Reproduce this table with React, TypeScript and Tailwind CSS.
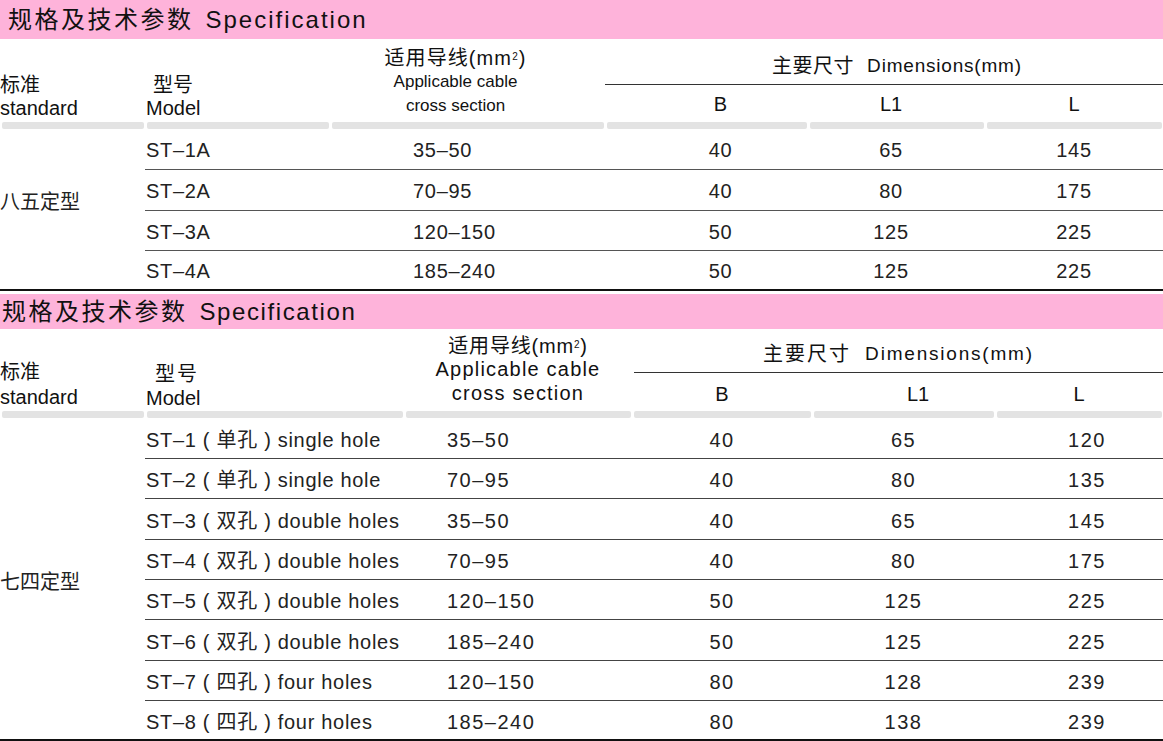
import React from "react";

const FONT = "font-['Liberation_Sans','Noto_Sans_CJK_SC',sans-serif]";

const t1Rows = [
  { m: "ST–1A", s: "35–50", b: "40", l1: "65", l: "145", h: "h-[41px]" },
  { m: "ST–2A", s: "70–95", b: "40", l1: "80", l: "175", h: "h-[41px]" },
  { m: "ST–3A", s: "120–150", b: "50", l1: "125", l: "225", h: "h-[40px]" },
  { m: "ST–4A", s: "185–240", b: "50", l1: "125", l: "225", h: "h-[38px]" },
];

const t2Rows = [
  { m: "ST–1 ( 单孔 ) single hole", s: "35–50", b: "40", l1: "65", l: "120", h: "h-[41px]" },
  { m: "ST–2 ( 单孔 ) single hole", s: "70–95", b: "40", l1: "80", l: "135", h: "h-[40px]" },
  { m: "ST–3 ( 双孔 ) double holes", s: "35–50", b: "40", l1: "65", l: "145", h: "h-[41px]" },
  { m: "ST–4 ( 双孔 ) double holes", s: "70–95", b: "40", l1: "80", l: "175", h: "h-[40px]" },
  { m: "ST–5 ( 双孔 ) double holes", s: "120–150", b: "50", l1: "125", l: "225", h: "h-[40px]" },
  { m: "ST–6 ( 双孔 ) double holes", s: "185–240", b: "50", l1: "125", l: "225", h: "h-[41px]" },
  { m: "ST–7 ( 四孔 ) four holes", s: "120–150", b: "80", l1: "128", l: "239", h: "h-[40px]" },
  { m: "ST–8 ( 四孔 ) four holes", s: "185–240", b: "80", l1: "138", l: "239", h: "h-[38px]" },
];

function Title({ pl, tight }: { pl: string; tight?: boolean }) {
  return (
    <div className={`flex items-center ${pl}`}>
      <span className="text-[24px] tracking-[2.5px]">规格及技术参数</span>
      <span className={`ml-[12px] text-[24px] ${tight ? "tracking-[1.6px]" : "tracking-[2px]"}`}>Specification</span>
    </div>
  );
}

function GrayBar({ widths }: { widths: string[] }) {
  return (
    <div className="flex h-[7px]">
      {widths.map((w, i) => (
        <div key={i} className={`${w} pl-[2px] pr-[1px]`}>
          <div className="h-full rounded-[2px] bg-[#e3e3e3]" />
        </div>
      ))}
    </div>
  );
}

export default function App() {
  return (
    <div className={`w-[1163px] h-[741px] overflow-hidden bg-white text-[#111] ${FONT}`}>
      {/* ===== Section 1 ===== */}
      <div className="h-[39px] bg-[#feb3da] flex items-center pt-[1px]">
        <Title pl="pl-[8px]" />
      </div>
      <div className="flex h-[83px]">
        <div className="w-[145px] flex flex-col justify-end pb-[2px] text-[20px] leading-[23px]">
          <span>标准</span>
          <span>standard</span>
        </div>
        <div className="w-[185px] flex flex-col justify-end pb-[2px] text-[20px] leading-[23px]">
          <span className="pl-[8px]">型号</span>
          <span className="pl-[1px]">Model</span>
        </div>
        <div className="w-[275px] flex flex-col justify-end items-center pr-[24px] pb-[4px] leading-[24px]">
          <span className="text-[20px] tracking-[1.1px]">
            适用导线(mm<sup className="text-[10px]">2</sup>)
          </span>
          <span className="text-[17px]">Applicable cable</span>
          <span className="text-[17px]">cross section</span>
        </div>
        <div className="flex-1 flex flex-col">
          <div className="flex-1 flex items-end justify-center pl-[26px] pb-[6px] border-b border-[#333] leading-[24px]">
            <span className="text-[20px] tracking-[0.5px]">主要尺寸</span>
            <span className="ml-[13px] text-[19px] tracking-[0.8px]">Dimensions(mm)</span>
          </div>
          <div className="h-[37px] flex items-center text-[20px] pt-[1px]">
            <div className="w-[203px] text-center pl-[28px]">B</div>
            <div className="w-[177px] text-center pr-[11px]">L1</div>
            <div className="flex-1 text-center">L</div>
          </div>
        </div>
      </div>
      <GrayBar widths={["w-[145px]", "w-[185px]", "w-[275px]", "w-[203px]", "w-[177px]", "w-[178px]"]} />
      <div className="flex">
        <div className="w-[145px] flex items-center pb-[14px] text-[20px] text-[#222]">八五定型</div>
        <div className="flex-1 flex flex-col text-[20px] tracking-[0.7px] text-[#222]">
          {t1Rows.map((r, i) => (
            <div
              key={i}
              className={`flex items-center pt-[2px] ${r.h} ${i < t1Rows.length - 1 ? "border-b border-[#555]" : ""}`}
            >
              <div className="w-[185px] pl-[1px]">{r.m}</div>
              <div className="w-[275px] pl-[83px]">{r.s}</div>
              <div className="w-[203px] text-center pl-[28px]">{r.b}</div>
              <div className="w-[177px] text-center pr-[11px]">{r.l1}</div>
              <div className="flex-1 text-center">{r.l}</div>
            </div>
          ))}
        </div>
      </div>
      <div className="h-[2px] bg-[#111]" />

      {/* ===== Section 2 ===== */}
      <div className="mt-[3px] h-[35px] bg-[#feb3da] flex items-center">
        <Title pl="pl-[2px]" tight />
      </div>
      <div className="flex h-[82px]">
        <div className="w-[145px] flex flex-col justify-end pb-[1px] text-[20px] leading-[25px]">
          <span>标准</span>
          <span>standard</span>
        </div>
        <div className="w-[259px] flex flex-col justify-end pb-[1px] text-[20px] leading-[24px]">
          <span className="pl-[10px] tracking-[2px]">型号</span>
          <span className="pl-[1px]">Model</span>
        </div>
        <div className="w-[228px] flex flex-col justify-end items-center pb-[6px] leading-[23.5px] tracking-[1.2px]">
          <span className="text-[20px] tracking-[0.8px]">
            适用导线(mm<sup className="text-[10px]">2</sup>)
          </span>
          <span className="text-[20px]">Applicable cable</span>
          <span className="text-[20px]">cross section</span>
        </div>
        <div className="flex-1 flex flex-col">
          <div className="flex-1 flex items-end justify-center pb-[6px] border-b border-[#333] leading-[24px] ml-[2px]">
            <span className="text-[20px] tracking-[2px]">主要尺寸</span>
            <span className="ml-[14px] text-[19px] tracking-[1.8px]">Dimensions(mm)</span>
          </div>
          <div className="h-[38px] flex items-center text-[20px] pt-[3px]">
            <div className="w-[180px] text-center">B</div>
            <div className="w-[183px] text-center pl-[29px]">L1</div>
            <div className="flex-1 text-center">L</div>
          </div>
        </div>
      </div>
      <GrayBar widths={["w-[145px]", "w-[259px]", "w-[228px]", "w-[180px]", "w-[183px]", "w-[168px]"]} />
      <div className="flex">
        <div className="w-[145px] flex items-center pt-[7px] text-[20px] text-[#222]">七四定型</div>
        <div className="flex-1 flex flex-col text-[20px] tracking-[1.5px] text-[#222]">
          {t2Rows.map((r, i) => (
            <div
              key={i}
              className={`flex items-center pt-[3px] ${r.h} ${i < t2Rows.length - 1 ? "border-b border-[#444]" : ""}`}
            >
              <div className="w-[259px] pl-[1px] tracking-[0.7px]">{r.m}</div>
              <div className="w-[228px] pl-[43px]">{r.s}</div>
              <div className="w-[180px] text-center">{r.b}</div>
              <div className="w-[183px] text-center">{r.l1}</div>
              <div className="flex-1 text-center pl-[16px]">{r.l}</div>
            </div>
          ))}
        </div>
      </div>
      <div className="h-[2px] bg-[#111]" />
    </div>
  );
}
